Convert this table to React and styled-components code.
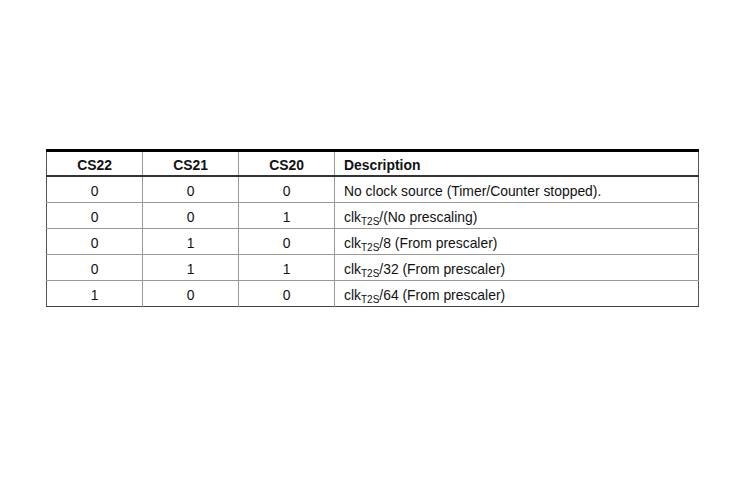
import React from "react";
import styled, { createGlobalStyle } from "styled-components";

const Global = createGlobalStyle`
  html, body { margin: 0; padding: 0; background: #fff; }
  body { font-family: "Liberation Sans", Arial, sans-serif; }
`;

const Page = styled.div`
  width: 729px;
  height: 486px;
  padding: 149px 0 0 46px;
  box-sizing: border-box;
`;

const Table = styled.table`
  border-collapse: collapse;
  table-layout: fixed;
  width: 653px;
  font-family: "Liberation Sans", Arial, sans-serif;
  font-size: 13.9px;
  line-height: 16px;
  color: #111;
  border-top: 3px solid #000;
  border-left: 1px solid #555;
  border-right: 1px solid #555;
  border-bottom: 1px solid #444;
`;

const Col = styled.col`
  width: ${(p) => p.$w}px;
`;

const Th = styled.th`
  height: 21px;
  padding: 2px 0 0 ${(p) => (p.$left ? "9px" : "0")};
  text-align: ${(p) => (p.$left ? "left" : "center")};
  font-weight: bold;
  border-bottom: 2px solid #333;
  border-left: 1px solid #999;
  &:first-child { border-left: none; }
`;

const Td = styled.td`
  height: 22px;
  padding: 3px 0 0 ${(p) => (p.$left ? "9px" : "0")};
  text-align: ${(p) => (p.$left ? "left" : "center")};
  border-top: 1px solid #999;
  border-left: 1px solid #999;
  &:first-child { border-left: none; }
`;

const Sub = styled.sub`
  font-size: 10px;
  vertical-align: -3px;
  line-height: 0;
`;

const Clk = () => (
  <>
    clk<Sub>T2S</Sub>
  </>
);

const rows = [
  ["0", "0", "0", "No clock source (Timer/Counter stopped)."],
  ["0", "0", "1", <><Clk />/(No prescaling)</>],
  ["0", "1", "0", <><Clk />/8 (From prescaler)</>],
  ["0", "1", "1", <><Clk />/32 (From prescaler)</>],
  ["1", "0", "0", <><Clk />/64 (From prescaler)</>],
];

export default function App() {
  return (
    <>
      <Global />
      <Page>
        <Table>
          <colgroup>
            <Col $w={96} />
            <Col $w={96} />
            <Col $w={96} />
            <Col $w={364} />
          </colgroup>
          <thead>
            <tr>
              <Th>CS22</Th>
              <Th>CS21</Th>
              <Th>CS20</Th>
              <Th $left>Description</Th>
            </tr>
          </thead>
          <tbody>
            {rows.map((r, i) => (
              <tr key={i}>
                <Td>{r[0]}</Td>
                <Td>{r[1]}</Td>
                <Td>{r[2]}</Td>
                <Td $left>{r[3]}</Td>
              </tr>
            ))}
          </tbody>
        </Table>
      </Page>
    </>
  );
}
